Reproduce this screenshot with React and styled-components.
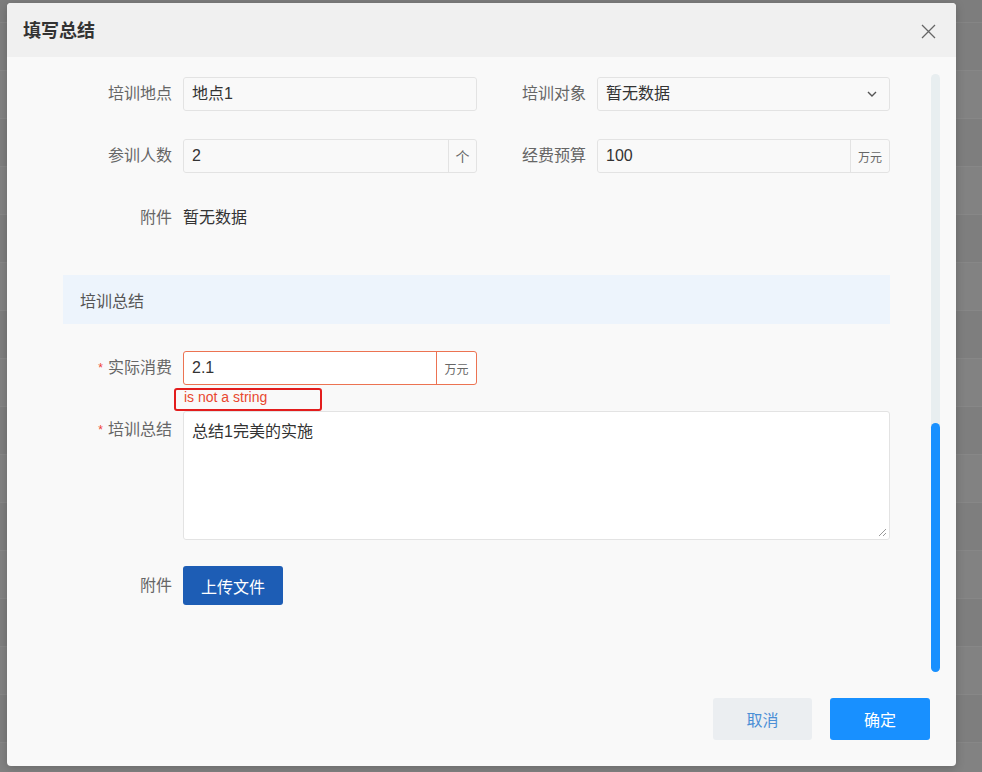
import React from "react";
import styled, { createGlobalStyle } from "styled-components";

const Global = createGlobalStyle`
  html, body { margin: 0; padding: 0; background: #7f7f7f; }
  * { box-sizing: border-box; }
  body { font-family: "Liberation Sans", "Noto Sans CJK SC", sans-serif; }
`;

const Page = styled.div`
  position: relative;
  width: 982px;
  height: 772px;
  overflow: hidden;
  background: #7f7f7f;
`;

const BgTop = styled.div`
  height: 23px;
  background: #7d7d7d;
  border-bottom: 1px solid #858585;
`;

const BgRow = styled.div`
  height: 48px;
  background: ${(p) => (p.$alt ? "#828282" : "#7e7e7e")};
  border-bottom: 1px solid #878787;
`;

const Modal = styled.div`
  position: absolute;
  left: 7px;
  top: 3px;
  width: 949px;
  height: 763px;
  background: #f9f9f9;
  border-radius: 4px;
  box-shadow: 0 2px 10px rgba(0, 0, 0, 0.2);
  display: flex;
  flex-direction: column;
  overflow: hidden;
  font-family: "Liberation Sans", "Noto Sans CJK SC", sans-serif;
`;

const Header = styled.div`
  height: 54px;
  flex-shrink: 0;
  background: #f0f0f0;
  display: flex;
  align-items: center;
  justify-content: space-between;
  padding: 0 20px 0 16px;
`;

const Title = styled.div`
  font-size: 18px;
  font-weight: 700;
  color: #333;
  padding-bottom: 2px;
`;

const Close = styled.button`
  border: none;
  background: none;
  padding: 0;
  margin-top: 2px;
  width: 15px;
  height: 15px;
  display: flex;
  cursor: pointer;
`;

const Body = styled.div`
  height: 623px;
  flex-shrink: 0;
  display: flex;
`;

const Content = styled.div`
  flex: 1;
  padding: 20px 0 0 56px;
`;

const Track = styled.div`
  width: 9px;
  margin: 17px 16px 8px 0;
  background: #e8eef0;
  border-radius: 5px;
  display: flex;
  flex-direction: column;
  justify-content: flex-end;
`;

const Thumb = styled.div`
  height: 249px;
  background: #1890ff;
  border-radius: 5px;
`;

const Row = styled.div`
  display: flex;
  align-items: ${(p) => (p.$top ? "flex-start" : "center")};
  width: 827px;
  margin-bottom: ${(p) => p.$mb ?? 28}px;
`;

const Field = styled.div`
  display: flex;
  align-items: center;
`;

const Label = styled.div`
  width: 120px;
  flex-shrink: 0;
  padding-right: 11px;
  text-align: right;
  font-size: 16px;
  color: #666;
  line-height: ${(p) => p.$lh || 34}px;
  padding-top: ${(p) => p.$pt || 0}px;
  align-self: ${(p) => (p.$top ? "flex-start" : "center")};
`;

const Star = styled.span`
  color: #f04134;
  font-size: 12px;
  margin-right: 5px;
  vertical-align: 1px;
`;

const InputBox = styled.div`
  width: ${(p) => p.$w}px;
  height: 34px;
  border: 1px solid ${(p) => (p.$error ? "#ec7352" : "#e3e3e3")};
  border-radius: 3px;
  background: ${(p) => (p.$error ? "#fff" : "#f9f9f9")};
  display: flex;
  align-items: stretch;
`;

const InputText = styled.div`
  flex: 1;
  padding: 0 8px;
  line-height: 32px;
  font-size: 16px;
  color: #333;
  white-space: nowrap;
`;

const Addon = styled.div`
  width: ${(p) => p.$w}px;
  border-left: 1px solid ${(p) => (p.$error ? "#ec7352" : "#e3e3e3")};
  display: flex;
  align-items: center;
  justify-content: center;
  font-size: ${(p) => p.$fs || 12}px;
  color: #666;
`;

const Chevron = styled.div`
  display: flex;
  align-items: center;
  padding-right: 12px;
`;

const PlainText = styled.div`
  font-size: 16px;
  color: #333;
  line-height: 34px;
`;

const Section = styled.div`
  width: 827px;
  height: 49px;
  margin-top: 40px;
  margin-bottom: 27px;
  background: #edf4fc;
  padding-left: 17px;
  display: flex;
  align-items: center;
  font-size: 16px;
  color: #555;
`;

const ErrorLine = styled.div`
  position: relative;
  height: 26px;
  margin-left: 120px;
  padding: 3px 0 0 1px;
  font-size: 14px;
  line-height: 18px;
  color: #e8472f;
  font-family: "Liberation Sans", sans-serif;
`;

const Annotation = styled.div`
  position: absolute;
  left: -9px;
  top: 3px;
  width: 148px;
  height: 23px;
  border: 2px solid #e31d1d;
  border-radius: 3px;
`;

const TextArea = styled.div`
  position: relative;
  width: 707px;
  height: 129px;
  background: #fff;
  border: 1px solid #e3e3e3;
  border-radius: 3px;
  padding: 8px 8px;
  font-size: 16px;
  line-height: 24px;
  color: #333;
`;

const Grip = styled.svg`
  position: absolute;
  right: 2px;
  bottom: 2px;
`;

const UploadButton = styled.button`
  width: 100px;
  height: 39px;
  border: none;
  border-radius: 3px;
  background: #1d5db5;
  color: #fff;
  font-size: 16px;
  font-family: inherit;
  cursor: pointer;
`;

const Footer = styled.div`
  flex: 1;
  display: flex;
  justify-content: flex-end;
  align-items: flex-end;
  gap: 18px;
  padding: 0 26px 26px 0;
`;

const Btn = styled.button`
  width: ${(p) => p.$w}px;
  height: 42px;
  border: none;
  border-radius: 3px;
  background: ${(p) => (p.$primary ? "#1890ff" : "#ebeef1")};
  color: ${(p) => (p.$primary ? "#fff" : "#4b8fd6")};
  font-size: 16px;
  font-family: inherit;
  cursor: pointer;
`;

const CloseIcon = () => (
  <svg width="15" height="15" viewBox="0 0 15 15">
    <path d="M1 1 L14 14 M14 1 L1 14" stroke="#666" strokeWidth="1.3" fill="none" />
  </svg>
);

const ChevronIcon = () => (
  <svg width="10" height="6" viewBox="0 0 10 6">
    <path d="M1 1 L5 5 L9 1" stroke="#555" strokeWidth="1.4" fill="none" />
  </svg>
);

export default function App() {
  const rows = Array.from({ length: 16 });
  return (
    <Page>
      <Global />
      <BgTop />
      {rows.map((_, i) => (
        <BgRow key={i} $alt={i % 2 === 1} />
      ))}
      <Modal>
        <Header>
          <Title>填写总结</Title>
          <Close aria-label="close">
            <CloseIcon />
          </Close>
        </Header>
        <Body>
          <Content>
            <Row>
              <Field>
                <Label>培训地点</Label>
                <InputBox $w={294}>
                  <InputText>地点1</InputText>
                </InputBox>
              </Field>
              <Field>
                <Label>培训对象</Label>
                <InputBox $w={293}>
                  <InputText>暂无数据</InputText>
                  <Chevron>
                    <ChevronIcon />
                  </Chevron>
                </InputBox>
              </Field>
            </Row>
            <Row>
              <Field>
                <Label>参训人数</Label>
                <InputBox $w={294}>
                  <InputText>2</InputText>
                  <Addon $w={28} $fs={14}>个</Addon>
                </InputBox>
              </Field>
              <Field>
                <Label>经费预算</Label>
                <InputBox $w={293}>
                  <InputText>100</InputText>
                  <Addon $w={39}>万元</Addon>
                </InputBox>
              </Field>
            </Row>
            <Row $mb={0}>
              <Field>
                <Label>附件</Label>
                <PlainText>暂无数据</PlainText>
              </Field>
            </Row>
            <Section>培训总结</Section>
            <Row $mb={0}>
              <Field>
                <Label>
                  <Star>*</Star>实际消费
                </Label>
                <InputBox $w={294} $error>
                  <InputText>2.1</InputText>
                  <Addon $w={40} $error>万元</Addon>
                </InputBox>
              </Field>
            </Row>
            <ErrorLine>
              is not a string
              <Annotation />
            </ErrorLine>
            <Row $top $mb={26}>
              <Label $top $lh={24} $pt={7}>
                <Star>*</Star>培训总结
              </Label>
              <TextArea>
                总结1完美的实施
                <Grip width="9" height="9" viewBox="0 0 9 9">
                  <path d="M8 1 L1 8 M8 5 L5 8" stroke="#999" strokeWidth="1" fill="none" />
                </Grip>
              </TextArea>
            </Row>
            <Row>
              <Label $lh={39}>附件</Label>
              <UploadButton>上传文件</UploadButton>
            </Row>
          </Content>
          <Track>
            <Thumb />
          </Track>
        </Body>
        <Footer>
          <Btn $w={99}>取消</Btn>
          <Btn $w={100} $primary>确定</Btn>
        </Footer>
      </Modal>
    </Page>
  );
}
